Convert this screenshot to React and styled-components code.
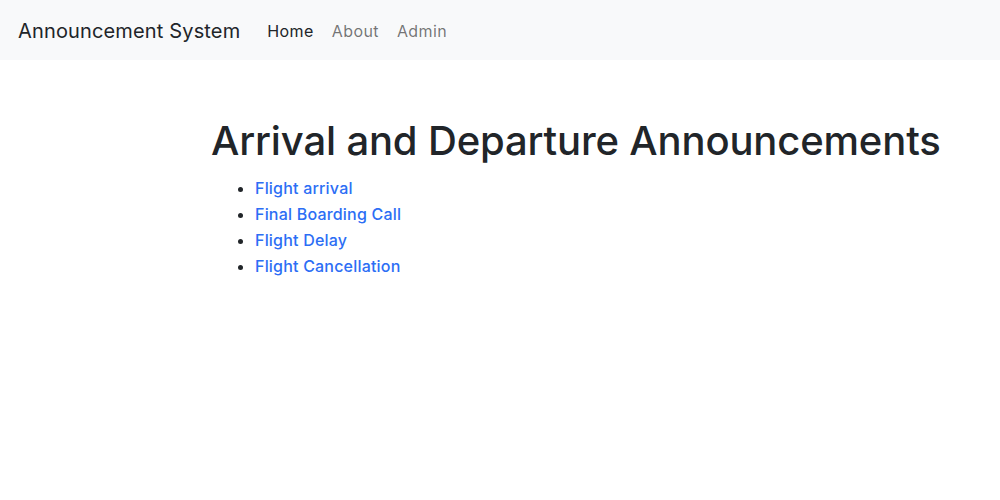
import React from 'react';
import styled, { createGlobalStyle } from 'styled-components';

const GlobalStyle = createGlobalStyle`
  body {
    margin: 0;
    font-family: Inter, "Noto Sans", "Liberation Sans", sans-serif;
    color: #212529;
    background: #ffffff;
  }
`;

const Navbar = styled.nav`
  height: 60px;
  box-sizing: border-box;
  background: #f8f9fa;
  display: flex;
  align-items: center;
  padding: 2px 18px 0;
`;

const Brand = styled.a`
  font-size: 20px;
  letter-spacing: 0.15px;
  color: #212529;
  text-decoration: none;
  margin-right: 27px;
`;

const NavLinks = styled.div`
  display: flex;
  gap: 18px;
`;

const NavLink = styled.a`
  font-size: 16px;
  letter-spacing: 0.4px;
  text-decoration: none;
  color: ${(p) => (p.$active ? '#212529' : 'rgba(0, 0, 0, 0.55)')};
`;

const Main = styled.main`
  padding: 57px 0 0 211px;
`;

const Title = styled.h1`
  margin: 0 0 10px;
  font-size: 40px;
  font-weight: 500;
  line-height: 1.2;
  letter-spacing: -0.15px;
`;

const List = styled.ul`
  margin: 0;
  padding-left: 44px;
`;

const Item = styled.li`
  font-size: 16px;
  line-height: 26px;
`;

const Link = styled.a`
  color: #2c6ef5;
  font-weight: 500;
  letter-spacing: 0.2px;
  text-decoration: none;
`;

const announcements = [
  'Flight arrival',
  'Final Boarding Call',
  'Flight Delay',
  'Flight Cancellation',
];

const App = () => {
  return (
    <>
      <GlobalStyle />
      <Navbar>
        <Brand href="#">Announcement System</Brand>
        <NavLinks>
          <NavLink href="#" $active>Home</NavLink>
          <NavLink href="#">About</NavLink>
          <NavLink href="#">Admin</NavLink>
        </NavLinks>
      </Navbar>
      <Main>
        <Title>Arrival and Departure Announcements</Title>
        <List>
          {announcements.map((a) => (
            <Item key={a}>
              <Link href="#">{a}</Link>
            </Item>
          ))}
        </List>
      </Main>
    </>
  );
};

export default App;
